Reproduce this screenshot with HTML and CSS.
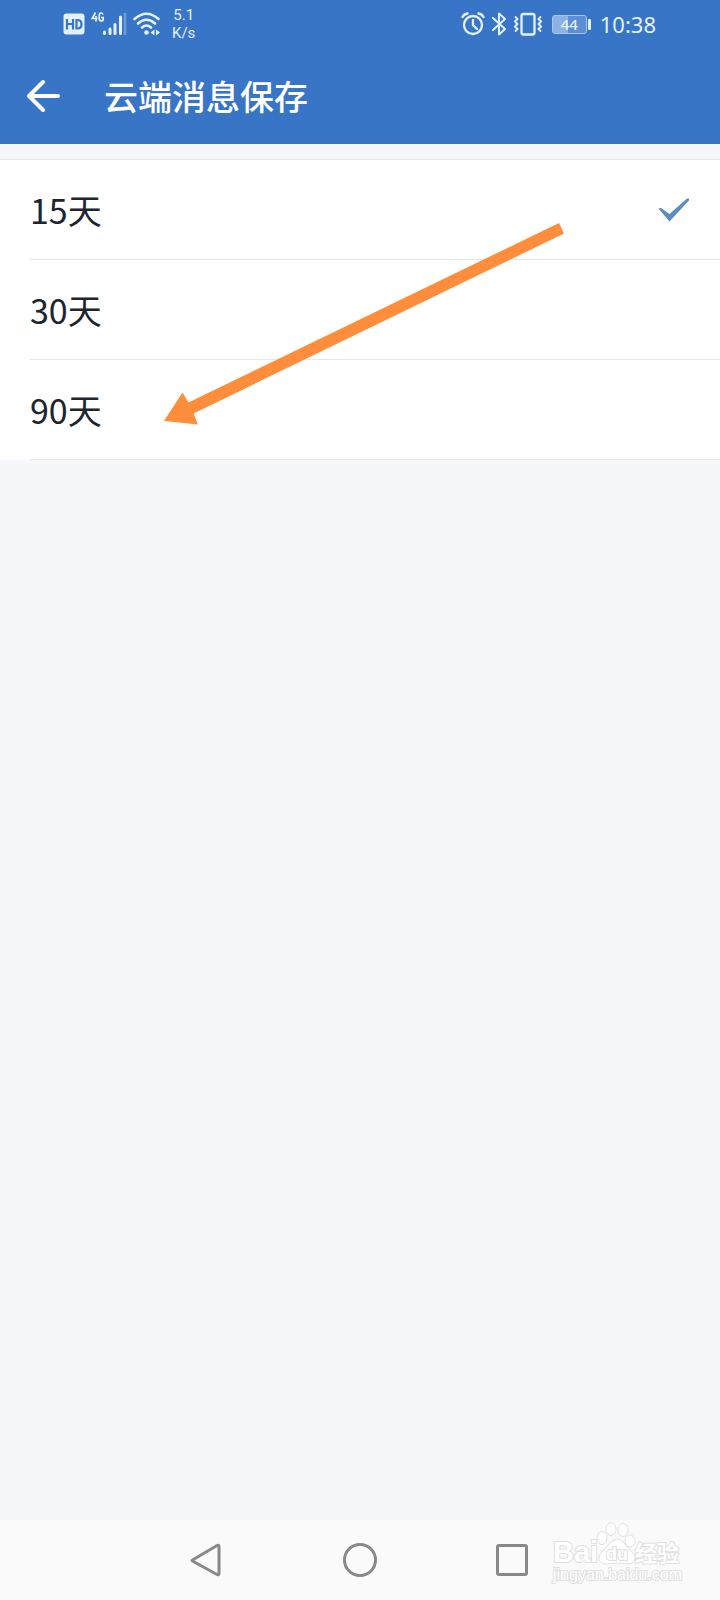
FILE: index.html
```html
<!DOCTYPE html>
<html lang="zh-CN">
<head>
<meta charset="UTF-8">
<meta name="viewport" content="width=device-width, initial-scale=1.0">
<title>云端消息保存</title>
<link rel="stylesheet" href="styles.css">
</head>
<body>

<header class="top">
  <div class="status-bar">
    <div class="status-left">
      <svg class="hd" width="22" height="22" viewBox="0 0 22 22">
        <rect x="0.500" y="0.500" width="21" height="21" rx="3" fill="#e4f2ff"/>
        <path d="M4 6v10.500M10 6v10.500M4 11h6M13.500 6v10.500M12.500 7h2q4 0 4 4.200t-4 4.300h-2" fill="none" stroke="#3875c6" stroke-width="2.200"/>
      </svg>
      <svg class="signal" width="36" height="26" viewBox="0 0 36 26">
        <path d="M4.500 1.500L1.200 7.500H6.500M5 5v5.500M12 3.500Q11.500 2 10.200 2Q8.200 2 8.200 4.500v3q0 2.400 2 2.400t2-2V6.500H10" fill="none" stroke="#e4f2ff" stroke-width="1.700"/>
        <path d="M13.500 21v1.500M19 18v4.500M24 13.500v9M29.500 6v16.500" fill="none" stroke="#e4f2ff" stroke-width="3" stroke-linecap="round"/>
        <path d="M34 2v22" stroke="#6d9cd9" stroke-width="2.500"/>
      </svg>
      <svg class="wifi" width="28" height="24" viewBox="0 0 28 24" fill="none" stroke="#e4f2ff" stroke-width="2.600" stroke-linecap="round">
        <path d="M1.500 7Q13.500-3.500 25.500 7M5 11.500Q13.500 4 22 11.500M9 15.500Q13.500 11.500 18 15.500"/>
        <circle cx="13.500" cy="20.500" r="2.300" fill="#e4f2ff" stroke="none"/>
        <path d="M17.500 20.500l4-3v6zM27 20.500l-4-3v6z" fill="#e4f2ff" stroke="none"/>
      </svg>
      <div class="speed"><span>5.1</span><span>K/s</span></div>
    </div>
    <div class="status-right">
      <svg class="alarm" width="24" height="24" viewBox="0 0 24 24" fill="none" stroke="#e4f2ff" stroke-width="2.300" stroke-linecap="round">
        <circle cx="12" cy="13" r="9"/>
        <path d="M12 8v5l4 4M1.500 5Q3 2 6.500 1.500M22.500 5Q21 2 17.500 1.500"/>
      </svg>
      <svg class="bluetooth" width="16" height="24" viewBox="0 0 16 24" fill="none" stroke="#e4f2ff" stroke-width="2" stroke-linejoin="round" stroke-linecap="round">
        <path d="M2 6l12 11-6 5.500V1.500L14 7 2 18"/>
      </svg>
      <svg class="vibrate" width="30" height="24" viewBox="0 0 30 24" fill="none" stroke="#e4f2ff" stroke-width="2.300">
        <rect x="8.500" y="2" width="13" height="20.500" rx="2"/>
        <path d="M2 4.500L4.500 7 2 9.500 4.500 12 2 14.500 4.500 17 2 19.500M28 4.500L25.500 7 28 9.500 25.500 12 28 14.500 25.500 17 28 19.500" stroke-width="2" stroke-linejoin="round"/>
      </svg>
      <div class="battery"><span>44</span></div>
      <time>10:38</time>
    </div>
  </div>
  <div class="title-bar">
    <button class="back" type="button" aria-label="返回">
      <svg width="36" height="36" viewBox="0 0 36 36" fill="none" stroke="#fff" stroke-width="4" stroke-linecap="round" stroke-linejoin="round">
        <path d="M17 4L3 18l14 14M3 18h29"/>
      </svg>
    </button>
    <h1>云端消息保存</h1>
  </div>
</header>

<main>
  <form class="options">
    <label class="option">
      <span>15天</span>
      <input type="radio" name="days" value="15" checked>
      <svg class="check" width="32" height="24" viewBox="0 0 32 24">
        <path d="M0.500 10.500L3 10l8.500 6L29 0.500h2v2L11.500 23.500z" fill="#5b8dbd"/>
      </svg>
    </label>
    <label class="option">
      <span>30天</span>
      <input type="radio" name="days" value="30">
    </label>
    <label class="option">
      <span>90天</span>
      <input type="radio" name="days" value="90">
    </label>
    <svg class="pointer" width="402" height="202" viewBox="0 0 402 202">
      <path d="M0 198L18.500 169.500l6 10L395 0l5 10.500L29.500 190.500l4.500 11z" fill="#ff8d3b"/>
    </svg>
  </form>
</main>

<nav class="nav-bar">
  <button type="button" aria-label="后退">
    <svg width="36" height="36" viewBox="0 0 36 36"><path d="M2.500 18L27 3.500Q29 2.500 29 4.500v27q0 2-2 1L2.500 19Q1.500 18.500 2.500 18z"/></svg>
  </button>
  <button type="button" aria-label="主页">
    <svg width="36" height="36" viewBox="0 0 36 36"><circle cx="18" cy="18" r="15.500"/></svg>
  </button>
  <button type="button" aria-label="最近任务">
    <svg width="36" height="36" viewBox="0 0 36 36"><rect x="3.500" y="3.500" width="29" height="29" rx="1.500"/></svg>
  </button>
  <svg class="watermark" width="136" height="64" viewBox="0 0 136 64">
    <text class="logo" x="2" y="41">Bai</text>
    <g>
      <path d="M66 18q5 0 9 6t8 9q4 9-6 10-11-2-22 0-10-1-6-10 4-4 8-9t9-6z"/>
      <ellipse cx="51" cy="17" rx="5" ry="6.500"/>
      <ellipse cx="60" cy="8" rx="5" ry="6.500"/>
      <ellipse cx="72" cy="9" rx="5" ry="6.500"/>
      <ellipse cx="79" cy="20" rx="5" ry="6"/>
    </g>
    <text class="du" x="55" y="39">du</text>
    <text class="cn" x="84" y="40">经验</text>
    <text class="site" x="2" y="59">jingyan.baidu.com</text>
  </svg>
</nav>

</body>
</html>
```
FILE: styles.css
```css
* {
  box-sizing: border-box;
}
body {
  margin: 0;
  min-height: 100vh;
  display: flex;
  flex-direction: column;
  background: #f5f7fb;
  color: #20242c;
  font-family: "Noto Sans CJK SC", "Noto Sans", sans-serif;
}
button {
  display: flex;
  padding: 0;
  border: none;
  background: none;
  cursor: pointer;
}
.top {
  background: #3875c6;
  color: #fff;
}
.status-bar {
  display: flex;
  justify-content: space-between;
  align-items: center;
  height: 48px;
  padding: 0 64px 0 63px;
  color: #e4f2ff;
}
.status-left, .status-right {
  display: flex;
  align-items: center;
}
.status-left {
  gap: 6px;
}
.status-right {
  gap: 6px;
}
.speed {
  display: flex;
  flex-direction: column;
  align-items: center;
  margin-left: 5px;
  font: 15px/18px Roboto, sans-serif;
}
.battery {
  position: relative;
  width: 35px;
  height: 19px;
  margin: 0 7px 0 3px;
  border: 1px solid #a9c8ee;
  border-radius: 3px;
  background: linear-gradient(90deg, #8db2e4 44%, #5c8ed3 44%);
  font: 500 15px/17px "Noto Sans", sans-serif;
  text-align: center;
}
.battery::after {
  content: "";
  position: absolute;
  top: 3px;
  right: -5px;
  width: 3px;
  height: 11px;
  border-radius: 1px;
  background: #e4f2ff;
}
time {
  font: 22px/28px "Noto Sans", sans-serif;
}
.title-bar {
  display: flex;
  align-items: center;
  gap: 42px;
  height: 96px;
  padding: 0 26px;
}
h1 {
  margin: 0;
  font-size: 34px;
  line-height: 48px;
  font-weight: 500;
}
main {
  flex: 1;
  padding-top: 15px;
}
.options {
  position: relative;
  border-top: 1px solid #e4e6ea;
  background: #fff;
}
.option {
  display: flex;
  justify-content: space-between;
  align-items: center;
  height: 100px;
  padding: 0 30px;
  background: linear-gradient(#e6e7e9, #e6e7e9) 30px 100% / 100% 1px no-repeat;
  font-size: 34px;
  line-height: 48px;
  cursor: pointer;
}
.option input {
  position: absolute;
  opacity: 0;
}
.check {
  display: none;
}
.option input:checked + .check {
  display: block;
}
.pointer {
  position: absolute;
  top: 63px;
  left: 164px;
  pointer-events: none;
}
.nav-bar {
  position: relative;
  display: flex;
  justify-content: center;
  align-items: center;
  gap: 116px;
  height: 80px;
  background: #fafafa;
}
.nav-bar button svg {
  fill: none;
  stroke: #888;
  stroke-width: 3;
}
.watermark {
  position: absolute;
  top: 1px;
  right: 33px;
  fill: #fff;
  stroke: #e0e0e0;
  stroke-width: 1;
  font-family: "Liberation Sans", "Noto Sans CJK SC", sans-serif;
}
.watermark text {
  paint-order: stroke;
  stroke-width: 2;
}
.logo {
  font-size: 29px;
  font-weight: bold;
}
.du {
  font-size: 18px;
  font-weight: bold;
}
.cn {
  font-size: 22px;
  font-weight: bold;
}
.site {
  font-size: 16px;
}
```
